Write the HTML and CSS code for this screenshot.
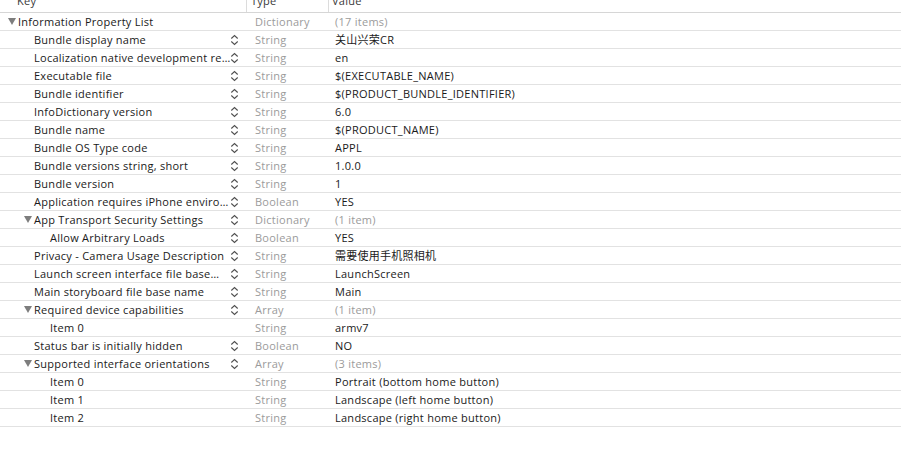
FILE: index.html
```html
<!DOCTYPE html>
<html>
<head>
<meta charset="utf-8">
<link rel="stylesheet" href="styles.css">
</head>
<body>
<div class="outline">
  <div class="header">
    <div class="hcell hkey"><span>Key</span></div>
    <div class="hcell htype"><span>Type</span></div>
    <div class="hcell hvalue"><span>Value</span></div>
  </div>

  <div class="row">
    <div class="key l0"><span class="disc open"></span><span class="ktext">Information Property List</span></div>
    <div class="type">Dictionary</div>
    <div class="value dim">(17 items)</div>
  </div>
  <div class="row">
    <div class="key l1"><span class="disc"></span><span class="ktext">Bundle display name</span><span class="step"></span></div>
    <div class="type">String</div>
    <div class="value">关山兴荣CR</div>
  </div>
  <div class="row">
    <div class="key l1"><span class="disc"></span><span class="ktext">Localization native development re…</span><span class="step"></span></div>
    <div class="type">String</div>
    <div class="value">en</div>
  </div>
  <div class="row">
    <div class="key l1"><span class="disc"></span><span class="ktext">Executable file</span><span class="step"></span></div>
    <div class="type">String</div>
    <div class="value">$(EXECUTABLE_NAME)</div>
  </div>
  <div class="row">
    <div class="key l1"><span class="disc"></span><span class="ktext">Bundle identifier</span><span class="step"></span></div>
    <div class="type">String</div>
    <div class="value">$(PRODUCT_BUNDLE_IDENTIFIER)</div>
  </div>
  <div class="row">
    <div class="key l1"><span class="disc"></span><span class="ktext">InfoDictionary version</span><span class="step"></span></div>
    <div class="type">String</div>
    <div class="value">6.0</div>
  </div>
  <div class="row">
    <div class="key l1"><span class="disc"></span><span class="ktext">Bundle name</span><span class="step"></span></div>
    <div class="type">String</div>
    <div class="value">$(PRODUCT_NAME)</div>
  </div>
  <div class="row">
    <div class="key l1"><span class="disc"></span><span class="ktext">Bundle OS Type code</span><span class="step"></span></div>
    <div class="type">String</div>
    <div class="value">APPL</div>
  </div>
  <div class="row">
    <div class="key l1"><span class="disc"></span><span class="ktext">Bundle versions string, short</span><span class="step"></span></div>
    <div class="type">String</div>
    <div class="value">1.0.0</div>
  </div>
  <div class="row">
    <div class="key l1"><span class="disc"></span><span class="ktext">Bundle version</span><span class="step"></span></div>
    <div class="type">String</div>
    <div class="value">1</div>
  </div>
  <div class="row">
    <div class="key l1"><span class="disc"></span><span class="ktext">Application requires iPhone enviro…</span><span class="step"></span></div>
    <div class="type">Boolean</div>
    <div class="value">YES</div>
  </div>
  <div class="row">
    <div class="key l1"><span class="disc open"></span><span class="ktext">App Transport Security Settings</span><span class="step"></span></div>
    <div class="type">Dictionary</div>
    <div class="value dim">(1 item)</div>
  </div>
  <div class="row">
    <div class="key l2"><span class="disc"></span><span class="ktext">Allow Arbitrary Loads</span><span class="step"></span></div>
    <div class="type">Boolean</div>
    <div class="value">YES</div>
  </div>
  <div class="row">
    <div class="key l1"><span class="disc"></span><span class="ktext">Privacy - Camera Usage Description</span><span class="step"></span></div>
    <div class="type">String</div>
    <div class="value">需要使用手机照相机</div>
  </div>
  <div class="row">
    <div class="key l1"><span class="disc"></span><span class="ktext">Launch screen interface file base…</span><span class="step"></span></div>
    <div class="type">String</div>
    <div class="value">LaunchScreen</div>
  </div>
  <div class="row">
    <div class="key l1"><span class="disc"></span><span class="ktext">Main storyboard file base name</span><span class="step"></span></div>
    <div class="type">String</div>
    <div class="value">Main</div>
  </div>
  <div class="row">
    <div class="key l1"><span class="disc open"></span><span class="ktext">Required device capabilities</span><span class="step"></span></div>
    <div class="type">Array</div>
    <div class="value dim">(1 item)</div>
  </div>
  <div class="row">
    <div class="key l2"><span class="disc"></span><span class="ktext">Item 0</span></div>
    <div class="type">String</div>
    <div class="value">armv7</div>
  </div>
  <div class="row">
    <div class="key l1"><span class="disc"></span><span class="ktext">Status bar is initially hidden</span><span class="step"></span></div>
    <div class="type">Boolean</div>
    <div class="value">NO</div>
  </div>
  <div class="row">
    <div class="key l1"><span class="disc open"></span><span class="ktext">Supported interface orientations</span><span class="step"></span></div>
    <div class="type">Array</div>
    <div class="value dim">(3 items)</div>
  </div>
  <div class="row">
    <div class="key l2"><span class="disc"></span><span class="ktext">Item 0</span></div>
    <div class="type">String</div>
    <div class="value">Portrait (bottom home button)</div>
  </div>
  <div class="row">
    <div class="key l2"><span class="disc"></span><span class="ktext">Item 1</span></div>
    <div class="type">String</div>
    <div class="value">Landscape (left home button)</div>
  </div>
  <div class="row">
    <div class="key l2"><span class="disc"></span><span class="ktext">Item 2</span></div>
    <div class="type">String</div>
    <div class="value">Landscape (right home button)</div>
  </div>
</div>
</body>
</html>
```
FILE: styles.css
```css
html, body {
  margin: 0;
  padding: 0;
  background: #ffffff;
}
body {
  font-family: "Open Sans", "Noto Sans CJK SC", sans-serif;
  font-size: 11px;
  letter-spacing: 0.26px;
  color: #1a1a1a;
  width: 901px;
  height: 468px;
  overflow: hidden;
}
.outline {
  display: flex;
  flex-direction: column;
}
.header {
  display: flex;
  height: 12px;
  border-bottom: 1px solid #d6d6d6;
  overflow: hidden;
  color: #3a3a3a;
}
.hcell {
  display: flex;
  align-items: flex-start;
}
.hcell span {
  display: block;
  line-height: 17px;
  margin-top: -8px;
}
.hkey {
  width: 247px;
  padding-left: 17px;
  box-sizing: border-box;
  border-right: 1px solid #dcdcdc;
}
.htype {
  width: 82px;
  padding-left: 4px;
  box-sizing: border-box;
  border-right: 1px solid #dcdcdc;
}
.hvalue {
  flex: 1;
  padding-left: 3px;
}
.row {
  display: flex;
  height: 17px;
  line-height: 17px;
  border-bottom: 1px solid #e2e2e2;
  white-space: nowrap;
}
.key {
  width: 248px;
  display: flex;
  align-items: center;
  box-sizing: border-box;
  padding-right: 9px;
}
.l0 { padding-left: 8px; }
.l1 { padding-left: 24px; }
.l2 { padding-left: 40px; }
.disc {
  width: 10px;
  height: 17px;
  flex: none;
  position: relative;
}
.disc.open::before {
  content: "";
  position: absolute;
  left: 0;
  top: 5px;
  border-left: 4px solid transparent;
  border-right: 4px solid transparent;
  border-top: 7px solid #7d7d7d;
}
.ktext {
  flex: 1;
  min-width: 0;
  overflow: visible;
}
.step {
  flex: none;
  width: 9px;
  height: 12px;
  background-image: url("data:image/svg+xml;utf8,<svg xmlns='http://www.w3.org/2000/svg' width='9' height='12' viewBox='0 0 9 12'><path d='M1.3 4.5 L4.5 1.5 L7.7 4.5' fill='none' stroke='%23505050' stroke-width='1.1'/><path d='M1.3 7.5 L4.5 10.5 L7.7 7.5' fill='none' stroke='%23505050' stroke-width='1.1'/></svg>");
  background-repeat: no-repeat;
}
.type {
  width: 83px;
  padding-left: 7px;
  box-sizing: border-box;
  color: #9b9b9b;
}
.value {
  flex: 1;
  padding-left: 4px;
  color: #1a1a1a;
}
.value.dim {
  color: #9b9b9b;
}
```
